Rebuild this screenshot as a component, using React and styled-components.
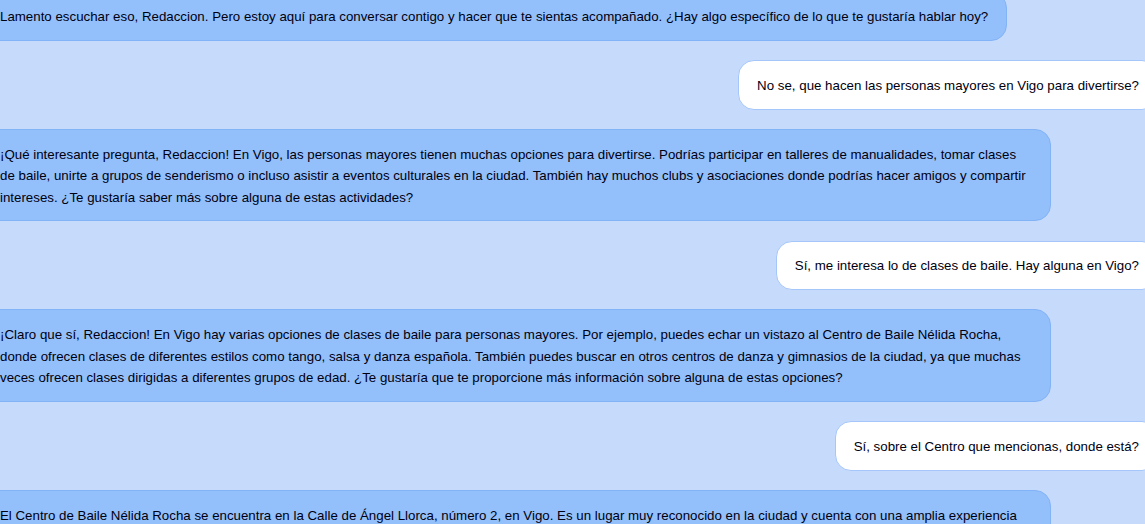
import React from "react";
import styled, { createGlobalStyle } from "styled-components";

const Global = createGlobalStyle`
  html, body { margin: 0; padding: 0; background: #c6dafc; overflow: hidden; }
  body { font-family: "Liberation Sans", Arial, sans-serif; }
`;

const Chat = styled.div`
  display: flex;
  flex-direction: column;
  gap: 19.25px;
  width: 1177px;
  margin: -8.5px 0 0 -19px;
`;

const Row = styled.div`
  display: flex;
  justify-content: ${(p) => (p.$user ? "flex-end" : "flex-start")};
`;

const Bubble = styled.div`
  max-width: 1032px;
  padding: 13.6px 18px 12.4px;
  border-radius: 16px;
  font-size: 13.3px;
  line-height: 21.5px;
  color: #000010;
  background: ${(p) => (p.$user ? "#ffffff" : "#93bffb")};
  border: 1px solid ${(p) => (p.$user ? "#a4c6fa" : "#82b3f6")};
`;

const messages = [
  { user: false, text: "Lamento escuchar eso, Redaccion. Pero estoy aquí para conversar contigo y hacer que te sientas acompañado. ¿Hay algo específico de lo que te gustaría hablar hoy?" },
  { user: true, text: "No se, que hacen las personas mayores en Vigo para divertirse?" },
  { user: false, text: "¡Qué interesante pregunta, Redaccion! En Vigo, las personas mayores tienen muchas opciones para divertirse. Podrías participar en talleres de manualidades, tomar clases de baile, unirte a grupos de senderismo o incluso asistir a eventos culturales en la ciudad. También hay muchos clubs y asociaciones donde podrías hacer amigos y compartir intereses. ¿Te gustaría saber más sobre alguna de estas actividades?" },
  { user: true, text: "Sí, me interesa lo de clases de baile. Hay alguna en Vigo?" },
  { user: false, text: "¡Claro que sí, Redaccion! En Vigo hay varias opciones de clases de baile para personas mayores. Por ejemplo, puedes echar un vistazo al Centro de Baile Nélida Rocha, donde ofrecen clases de diferentes estilos como tango, salsa y danza española. También puedes buscar en otros centros de danza y gimnasios de la ciudad, ya que muchas veces ofrecen clases dirigidas a diferentes grupos de edad. ¿Te gustaría que te proporcione más información sobre alguna de estas opciones?" },
  { user: true, text: "Sí, sobre el Centro que mencionas, donde está?" },
  { user: false, text: "El Centro de Baile Nélida Rocha se encuentra en la Calle de Ángel Llorca, número 2, en Vigo. Es un lugar muy reconocido en la ciudad y cuenta con una amplia experiencia en la enseñanza de baile para personas de todas las edades. ¿Te gustaría saber sus horarios o cómo inscribirte?" },
];

export default function App() {
  return (
    <>
      <Global />
      <Chat>
        {messages.map((m, i) => (
          <Row key={i} $user={m.user}>
            <Bubble $user={m.user}>{m.text}</Bubble>
          </Row>
        ))}
      </Chat>
    </>
  );
}
